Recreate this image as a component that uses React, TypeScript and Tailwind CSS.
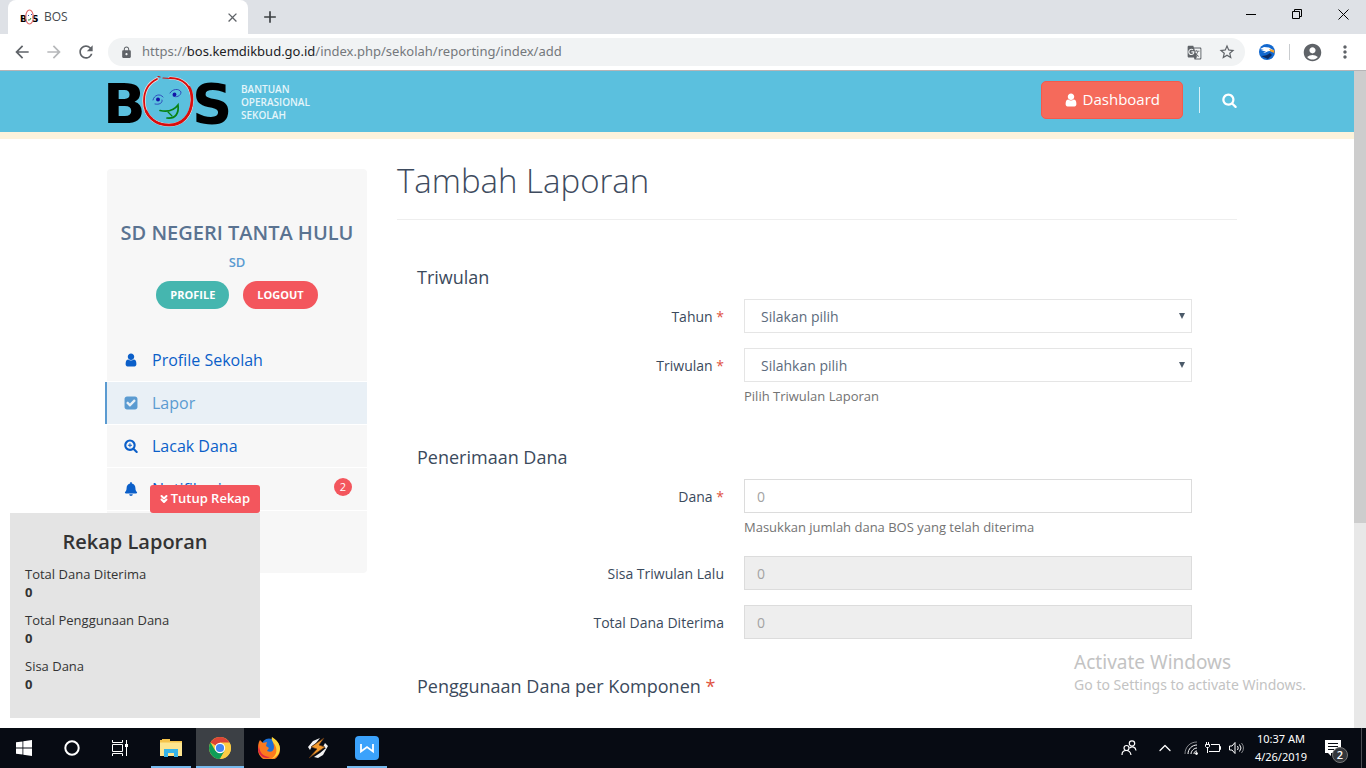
import type { ReactNode } from "react";
import { FaBell } from "react-icons/fa";
import { MdArrowBack, MdArrowForward, MdRefresh, MdLock, MdStarBorder, MdAccountCircle, MdMoreVert, MdAdd, MdClose, MdGTranslate } from "react-icons/md";
import { ChevronsDown, ChevronUp } from "lucide-react";

const OPEN = "font-['Open_Sans','Noto_Sans',sans-serif]";

function UserIcon({ className }: { className: string }) {
  return (
    <svg viewBox="-192 64 1664 1664" fill="currentColor" className={className} aria-hidden="true">
      <path d="M1280 1399q0 109-62.5 187t-150.5 78h-854q-88 0-150.5-78t-62.5-187q0-85 8.5-160.5t31.5-152 58.5-131 94-89 134.5-34.5q131 128 313 128t313-128q76 0 134.5 34.5t94 89 58.5 131 31.5 152 8.5 160.5zm-256-887q0 159-112.5 271.5t-271.5 112.5-271.5-112.5-112.5-271.5 112.5-271.5 271.5-112.5 271.5 112.5 112.5 271.5z" />
    </svg>
  );
}

function SearchIcon({ className, plus }: { className: string; plus?: boolean }) {
  return (
    <svg viewBox="64 64 1664 1728" fill="currentColor" className={className} aria-hidden="true">
      <path d="M1216 832q0-185-131.5-316.5t-316.5-131.5-316.5 131.5-131.5 316.5 131.5 316.5 316.5 131.5 316.5-131.5 131.5-316.5zm512 832q0 52-38 90t-90 38q-54 0-90-38l-343-342q-179 124-399 124-143 0-273.5-55.5t-225-150-150-225-55.5-273.5 55.5-273.5 150-225 225-150 273.5-55.5 273.5 55.5 225 150 150 225 55.5 273.5q0 220-124 399l343 343q37 37 37 90z" />
      {plus && (
        <path d="M1024 800v64q0 13-9.5 22.5t-22.5 9.500h-160v160q0 13-9.500 22.5t-22.5 9.500h-64q-13 0-22.5-9.500t-9.500-22.5v-160h-160q-13 0-22.5-9.500t-9.500-22.5v-64q0-13 9.500-22.5t22.5-9.500h160v-160q0-13 9.500-22.5t22.5-9.500h64q13 0 22.5 9.500t9.500 22.5v160h160q13 0 22.5 9.500t9.500 22.5z" />
      )}
    </svg>
  );
}

function CheckIcon({ className }: { className: string }) {
  return (
    <svg viewBox="64 64 1664 1664" fill="currentColor" className={className} aria-hidden="true">
      <path d="M813 1299l614-614q19-19 19-45t-19-45l-102-102q-19-19-45-19t-45 19l-467 467-211-211q-19-19-45-19t-45 19l-102 102q-19 19-19 45t19 45l358 358q19 19 45 19t45-19zm851-883v960q0 119-84.5 203.5t-203.5 84.5h-960q-119 0-203.5-84.5t-84.5-203.5v-960q0-119 84.5-203.5t203.5-84.5h960q119 0 203.5 84.5t84.5 203.5z" />
    </svg>
  );
}

function Favicon() {
  return (
    <svg viewBox="0 0 19 16" className="h-4 w-[19px]" role="img" aria-label="BOS">
      <g className="font-['DejaVu_Sans',sans-serif] font-bold" fontSize="9" fill="#000">
        <text x="0" y="13">B</text>
        <text x="12" y="13">S</text>
      </g>
      <ellipse cx="9.500" cy="8" rx="3.800" ry="7" fill="none" stroke="#e06a6a" strokeWidth="1.100" />
      <path d="M8 6.500h1m2-1h1" stroke="#3a46b0" />
      <path d="M8 11q2 1 3-2" fill="none" stroke="#2f8f3a" />
    </svg>
  );
}

function Logo({ className }: { className: string }) {
  return (
    <svg viewBox="-6 -4 136 70" className={className} role="img" aria-label="BOS">
      <g className="font-['DejaVu_Sans',sans-serif] font-bold" fontSize="56" fill="#000">
        <text x="-5" y="51">B</text>
        <text x="84" y="51">S</text>
      </g>
      <g fill="none" strokeLinecap="round">
        <path d="M49 7C41 11 36 19 36 29c0 16 12 24 25 24 14 0 23-10 23-25C84 14 75 6 62 6" stroke="#f6dede" strokeWidth="3.200" />
        <path d="M49 7C41 11 36 19 36 29c0 16 12 24 25 24 14 0 23-10 23-25C84 14 75 6 62 6" stroke="#d90d0d" strokeWidth="1.800" />
        <path d="M38 39c5 10 13 14 23 14 13 0 22-9 23-25 0-6-1-10-3-13" stroke="#d90d0d" strokeWidth="2.600" />
        <path d="M50 4.500l2 .5m3 1l7 .5" stroke="#d90d0d" strokeWidth="1.200" />
        <path d="M45 28c1-5 7-7 10-3m-8 7c4 1 8-1 7-4M62 21c2-4 9-5 11-1 0 4-5 6-8 4" stroke="#2a40b8" strokeWidth=".9" />
        <circle cx="50" cy="27.500" r="2" fill="#1414a8" />
        <circle cx="66.500" cy="22.500" r="1.900" fill="#1414a8" />
        <path d="M52 38.500c7 1.500 14 0 18-5.500 1 8-2 14-11 13" stroke="#078210" strokeWidth="1.700" />
        <path d="M60 40l4 4" stroke="#078210" strokeWidth="1.200" />
      </g>
    </svg>
  );
}

function TabStrip() {
  return (
    <div className="flex h-[34px] bg-[#dee1e6] pl-2">
      <div className="flex w-60 items-center rounded-t-lg bg-white pr-2 pl-3">
        <Favicon />
        <span className="ml-[5px] flex-1 text-xs text-[#45494d]">BOS</span>
        <button aria-label="Close tab" className="text-[#5f6368]"><MdClose size={15} /></button>
      </div>
      <button aria-label="New tab" className="ml-3 text-[#3c4043]"><MdAdd size={20} /></button>
      <div className="ml-auto flex items-center gap-9 pr-[17px] pb-[6px] text-black">
        <button aria-label="Minimize"><svg width="10" height="10" stroke="currentColor"><path d="M0 5.500h10" /></svg></button>
        <button aria-label="Restore"><svg width="10" height="10" fill="none" stroke="currentColor"><path d="M.5 2.500h7v7h-7zM2.500 2.500v-2h7v7h-2" /></svg></button>
        <button aria-label="Close"><svg width="11" height="11" stroke="currentColor"><path d="M.5.5l10 10M10.500.5l-10 10" /></svg></button>
      </div>
    </div>
  );
}

function AddressBar() {
  return (
    <div className="flex h-[37px] items-center border-b border-[#b6b4b6] bg-white pr-[11px] pl-3 text-[#5f6368]">
      <button aria-label="Back"><MdArrowBack size={20} /></button>
      <button aria-label="Forward" className="ml-3 text-[#b6b8ba]"><MdArrowForward size={20} /></button>
      <button aria-label="Reload" className="ml-3"><MdRefresh size={20} /></button>
      <div className="ml-3 flex h-7 flex-1 items-center rounded-full bg-[#f1f3f4] pr-[9px] pl-3">
        <MdLock size={13} />
        <p className="ml-[9px] flex-1 font-['Noto_Sans',sans-serif] text-[13px] text-[#74787c]">
          https://<span className="text-[#202124]">bos.kemdikbud.go.id</span>/index.php/sekolah/reporting/index/add
        </p>
        <MdGTranslate size={15} />
        <MdStarBorder size={18} className="ml-4" />
      </div>
      <svg viewBox="0 0 16 16" className="ml-[14px] size-4">
        <circle cx="8" cy="8" r="8" fill="#1268cf" />
        <path d="M1 5l4-2 5 .5 4 2.500-3 1c-3 0-4 2-7 2l3-1.500-5-1 3-.5z" fill="#fff" />
        <path d="M10 5l5 1 .5 3-4-1.500z" fill="#f5a32b" />
        <path d="M2 12c4 0 7-1 9-3l2 2-4 4z" fill="#0c2b63" />
      </svg>
      <span className="mr-3 ml-[14px] h-4 w-px bg-[#c9cccf]" />
      <button aria-label="Account"><MdAccountCircle size={21} /></button>
      <button aria-label="Menu" className="ml-3"><MdMoreVert size={20} /></button>
    </div>
  );
}

function SiteHeader() {
  return (
    <header className="border-b-[7px] border-[#fcf3dc] bg-[#5bc0de] pr-[10px]">
      <div className="mx-auto flex h-[61px] max-w-[1130px]">
        <Logo className="-mt-[3px] -ml-[5px] h-[70px] w-[136px] shrink-0" />
        <p className="mt-3 ml-[3px] text-[10px] leading-[13px] font-semibold text-[#e4f5fa]">
          BANTUAN<br />OPERASIONAL<br />SEKOLAH
        </p>
        <div className="ml-auto flex h-[58px] items-center text-white">
          <a href="#dashboard" className="flex h-[38px] items-center gap-[5px] rounded-[5px] border border-[#f55b4b] bg-[#f56a5b] px-[22px] pb-px text-[15px]">
            <UserIcon className="size-[14px]" />
            Dashboard
          </a>
          <span className="mr-[22px] ml-4 h-[26px] w-px bg-[#d5f0f8]" />
          <button aria-label="Search"><SearchIcon className="size-[15px]" /></button>
        </div>
      </div>
    </header>
  );
}

function MenuItem({ icon, label, active, badge }: { icon: ReactNode; label: string; active?: boolean; badge?: number }) {
  return (
    <li className="border-b border-white">
      <a
        href="#menu"
        className={
          active
            ? "-ml-[2px] flex h-[42px] items-center border-l-2 border-[#5b9bd1] bg-[#e9f0f6] pr-[15px] pl-[17px] text-[#5b9bd1]"
            : "flex h-[42px] items-center pr-[15px] pl-[17px] text-[#0b5fc9]"
        }
      >
        {icon}
        <span className="ml-[14px] flex-1 text-[16px]">{label}</span>
        {badge && <span className="mb-1 flex size-[18px] items-center justify-center rounded-full bg-[#f3565d] text-[11px] text-white">{badge}</span>}
      </a>
    </li>
  );
}

function Sidebar() {
  return (
    <aside className="mt-[30px] w-[260px] shrink-0 self-start rounded bg-[#f7f7f7] pt-[52px] pb-[62px]">
      <h2 className="text-center text-[20px] leading-6 font-semibold whitespace-nowrap text-[#5a7391]">SD NEGERI TANTA HULU</h2>
      <p className="mt-[9px] text-center text-[13px] leading-4 font-semibold text-[#5b9bd1]">SD</p>
      <div className="mt-[11px] flex justify-center gap-[14px] text-[11px] font-bold text-white">
        <button className="h-7 rounded-full bg-[#45b6af] px-[14px]">PROFILE</button>
        <button className="h-7 rounded-full bg-[#f3565d] px-[14px]">LOGOUT</button>
      </div>
      <ul className="mt-[30px]">
        <MenuItem icon={<UserIcon className="size-[14px]" />} label="Profile Sekolah" />
        <MenuItem icon={<CheckIcon className="size-[14px]" />} label="Lapor" active />
        <MenuItem icon={<SearchIcon plus className="size-[14px]" />} label="Lacak Dana" />
        <MenuItem icon={<FaBell className="size-[14px]" />} label="Notifikasi" badge={2} />
      </ul>
    </aside>
  );
}

function Field({ id, label, required, help, children }: { id: string; label: string; required?: boolean; help?: string; children: ReactNode }) {
  return (
    <div className="mb-[15px] grid grid-cols-[minmax(0,307fr)_minmax(0,448fr)] gap-x-5 pr-[45px]">
      <label htmlFor={id} className="pt-2 text-right text-[14px] leading-5 text-[#3b4a5c]">
        {label}
        {required && <span className="text-[#e0533f]"> *</span>}
      </label>
      <div>
        {children}
        {help && <p className="mt-[5px] text-[13px] leading-[18px] text-[#737373]">{help}</p>}
      </div>
    </div>
  );
}

function SelectBox({ id, text }: { id: string; text: string }) {
  return (
    <div className="relative">
      <select id={id} className="block h-[34px] w-full appearance-none border border-[#e5e5e5] bg-white px-4 text-[14px] text-[#5d6b7c]">
        <option>{text}</option>
      </select>
      <svg viewBox="0 0 6 6" className="pointer-events-none absolute top-[14px] right-[7px] size-[6px]" fill="#4b5a69"><path d="M0 0h6L3 6z" /></svg>
    </div>
  );
}

const INPUT = "block h-[34px] w-full border border-[#dcdcdc] bg-white px-3 text-[14px] placeholder:text-[#a3a3a3] disabled:bg-[#eeeeee]";

function ReportForm() {
  return (
    <main className="min-w-0 flex-1 pt-[17px]">
      <h1 className="border-b border-[#eeeeee] pb-[13px] text-[33px] leading-[50px] font-light text-[#3e4b5e]">Tambah Laporan</h1>
      <form className="pl-5">
        <h2 className="mt-[45px] mb-[10px] text-[18px] leading-6 text-[#3b4a5c]">Triwulan</h2>
        <Field id="tahun" label="Tahun" required><SelectBox id="tahun" text="Silakan pilih" /></Field>
        <Field id="triwulan" label="Triwulan" required help="Pilih Triwulan Laporan"><SelectBox id="triwulan" text="Silahkan pilih" /></Field>
        <h2 className="mt-10 mb-[10px] text-[18px] leading-6 text-[#3b4a5c]">Penerimaan Dana</h2>
        <Field id="dana" label="Dana" required help="Masukkan jumlah dana BOS yang telah diterima"><input id="dana" placeholder="0" className={INPUT} /></Field>
        <div className="pt-[5px]">
          <Field id="sisa" label="Sisa Triwulan Lalu"><input id="sisa" placeholder="0" disabled className={INPUT} /></Field>
        </div>
        <Field id="total" label="Total Dana Diterima"><input id="total" placeholder="0" disabled className={INPUT} /></Field>
        <h2 className="mt-[35px] text-[18px] leading-6 text-[#3b4a5c]">Penggunaan Dana per Komponen <span className="text-[#e0533f]">*</span></h2>
      </form>
    </main>
  );
}

function RecapPanel() {
  const rows = ["Total Dana Diterima", "Total Penggunaan Dana", "Sisa Dana"];
  return (
    <section className="absolute bottom-[10px] left-[10px] w-[250px] text-[#333333]">
      <button className="ml-auto flex h-7 items-center gap-px rounded-[3px] bg-[#f3565d] pr-[10px] pl-2 text-[13px] font-semibold text-white">
        <ChevronsDown size={12} strokeWidth={4} />
        Tutup Rekap
      </button>
      <div className="bg-[#e4e4e4] px-[15px] pt-[15px] pb-[15px] text-[13px] leading-[18px]">
        <h3 className="mb-[9px] text-center text-[20px] leading-7 font-semibold">Rekap Laporan</h3>
        <dl>
          {rows.map((r) => (
            <div key={r} className="mb-[10px]">
              <dt>{r}</dt>
              <dd className="font-bold">0</dd>
            </div>
          ))}
        </dl>
      </div>
    </section>
  );
}

function TaskButton({ label, tone, children }: { label: string; tone: "plain" | "open" | "active"; children: ReactNode }) {
  const look = {
    plain: "flex w-12 items-center justify-center",
    open: "flex w-12 items-center justify-center bg-[linear-gradient(#76b9ed,#76b9ed)] bg-[length:40px_2px] bg-bottom bg-no-repeat",
    active: "flex w-12 items-center justify-center border-b-2 border-[#76b9ed] bg-[#3c4045] pt-[2px]",
  }[tone];
  return <button aria-label={label} className={look}>{children}</button>;
}

function Taskbar() {
  return (
    <footer className="flex h-10 shrink-0 bg-[#070b13] text-white">
      <TaskButton label="Start" tone="plain">
        <svg viewBox="0 0 16 16" className="size-4" fill="#fff"><path d="M0 2.300l6.500-.9v6.200H0zM7.300 1.300L16 0v7.600H7.300zM0 8.400h6.500v6.200L0 13.700zM7.300 8.400H16V16l-8.700-1.300z" /></svg>
      </TaskButton>
      <TaskButton label="Search" tone="plain">
        <svg viewBox="0 0 16 16" className="size-4" fill="none" stroke="#fff" strokeWidth="2"><circle cx="8" cy="8" r="6.700" /></svg>
      </TaskButton>
      <TaskButton label="Task view" tone="plain">
        <svg viewBox="0 0 16 16" className="size-4" fill="none" stroke="#fff"><path d="M.5 0v2.500h10V0M.5 4.500h10v7H.5zM.5 16v-2.500h10V16M14.500 0v16" /><path d="M13 4h3v3h-3z" fill="#fff" stroke="none" /></svg>
      </TaskButton>
      <div className="ml-[3px] flex gap-px">
        <TaskButton label="File Explorer" tone="open">
          <svg viewBox="0 0 22 20" className="h-5 w-[22px]"><path d="M0 2h2V1h8v2h12v15H0z" fill="#f5c34b" /><path d="M0 4.500h22V18H0z" fill="#fde58f" /><path d="M4 19v-8h14v8h-4v-4H8v4z" fill="#36b4e8" /></svg>
        </TaskButton>
        <TaskButton label="Chrome" tone="active">
          <svg viewBox="0 0 22 22" className="size-[22px]">
            <circle cx="11" cy="11" r="11" fill="#fccc44" />
            <path d="M11 11L1.500 5.500A11 11 0 0 1 20.500 5.500H11z" fill="#db4437" />
            <path d="M1.500 5.500L6.300 13.800 11 16l-.3 6A11 11 0 0 1 1.500 5.500z" fill="#0f9d58" />
            <path d="M11 22l4.700-8.200L11 12l-4.700 2z" fill="#0f9d58" />
            <path d="M11 22l4.700-8.200L20.500 5.500A11 11 0 0 1 11 22z" fill="#fccc44" />
            <circle cx="11" cy="11" r="5.200" fill="#fff" /><circle cx="11" cy="11" r="4.100" fill="#4285f4" />
          </svg>
        </TaskButton>
        <TaskButton label="Firefox" tone="plain">
          <svg viewBox="0 0 22 22" className="size-[22px]">
            <circle cx="11" cy="9" r="7.500" fill="#1c6fd4" />
            <path d="M2 3l3 3 4-1-1 4 3 2-2 3c4 2 7 0 7-4 0-3-2-5 0-8 4 3 6 6 6 10a11 11 0 0 1-22 1C0 9 0 6 2 3z" fill="#fb7a1e" />
            <path d="M14 0c5 3 8 7 8 12a11 11 0 0 1-9 10c5-3 7-8 4-14-2-3-4-5-3-8z" fill="#ffd53a" />
            <path d="M1 8c0 7 4 12 11 12-4 3-11-1-12-7z" fill="#e0283f" />
          </svg>
        </TaskButton>
        <TaskButton label="Winamp" tone="plain">
          <svg viewBox="0 0 22 22" className="size-[22px]">
            <path d="M6 4l7-3-4 5-4 3-2 4-2-3zM18 6l3 3-5 9-5 3-4-1 6-4 6-5-3-1z" fill="#f2f2f2" />
            <path d="M17 1L4 10l6 2-8 9 16-11-6-2z" fill="#f39a2d" stroke="#5b3213" strokeWidth=".7" />
          </svg>
        </TaskButton>
        <TaskButton label="WPS Office" tone="open">
          <svg viewBox="0 0 24 24" className="size-6"><rect width="24" height="24" rx="4" fill="#3ba2fb" /><path d="M6 8v7.500l6-4.500 6 4.500V8" fill="none" stroke="#fff" strokeWidth="1.800" /></svg>
        </TaskButton>
      </div>
      <div className="ml-auto flex items-center">
        <svg viewBox="0 0 16 16" className="size-4" fill="none" stroke="#fff" strokeWidth="1.200"><circle cx="11" cy="3.500" r="2.700" /><circle cx="5.500" cy="8" r="2.500" /><path d="M1 15c0-6 8-6 9 0M8.500 8c3-2 6-1 6.500 2.500" /></svg>
        <ChevronUp size={20} strokeWidth={1.5} className="ml-[18px]" />
        <svg viewBox="0 0 14 14" className="ml-[9px] size-[14px]" fill="none" stroke="#fff"><path d="M1 13C1 6 6 1 13 1" opacity=".5" /><path d="M4 13c0-5 4-9 9-9M7 13c0-3 3-6 6-6M10 13c0-2 1-3 3-3" /><circle cx="12.500" cy="12.500" r="1" fill="#fff" /></svg>
        <svg viewBox="0 0 16 14" className="ml-[7px] h-[14px] w-4" fill="none" stroke="#fff"><path d="M6 3.500h8.500v7H4M14.500 5.500h1v3h-1M.5 3.500h4v2l-1 1h-2l-1-1zM1.500 1v2M3.500 1v2M2.500 7v5" /></svg>
        <svg viewBox="0 0 16 14" className="ml-2 h-[14px] w-4" fill="none" stroke="#fff"><path d="M.5 5h2.500l3-3.500v11L3 9H.5zM8.500 5q1.500 2 0 4M10.500 3.500q3 3.500 0 7" /><path d="M12.500 2q4 5 0 10" opacity=".5" /></svg>
        <div className="ml-[9px] flex w-[54px] flex-col items-center font-['Noto_Sans',sans-serif] text-[11px] leading-[18px] whitespace-nowrap">
          <span>10:37 AM</span>
          <span>4/26/2019</span>
        </div>
        <div className="relative mr-3 ml-[17px] pr-2">
          <svg viewBox="0 0 16 16" className="size-4"><path d="M0 0h16v13H6v3l-3-3H0z" fill="#fff" /><path d="M3 3.500h10M3 6.500h10M3 9.500h6" stroke="#070b13" /></svg>
          <span className="absolute top-[7px] left-[7px] flex size-4 items-center justify-center rounded-full border border-[#777] bg-[#33363b] text-[11px] font-semibold">2</span>
        </div>
        <span className="mr-1 h-10 w-px bg-[#4a4d53]" />
      </div>
    </footer>
  );
}

export default function App() {
  return (
    <div className={`flex h-screen flex-col overflow-hidden bg-white ${OPEN}`}>
      <TabStrip />
      <AddressBar />
      <div className="relative flex min-h-0 flex-1">
        <div className="min-w-0 flex-1 overflow-hidden">
          <SiteHeader />
          <div className="pr-[10px]">
            <div className="mx-auto flex max-w-[1130px] gap-[30px]">
              <Sidebar />
              <ReportForm />
            </div>
          </div>
        </div>
        <div className="w-3 bg-[#e8e8e8]"><div className="h-[452px] bg-[#cdcdcd]" /></div>
        <RecapPanel />
        <div className="pointer-events-none absolute right-[60px] bottom-[34px] font-['Noto_Sans',sans-serif] text-[#c3c3c3]">
          <p className="text-[19px] leading-7">Activate Windows</p>
          <p className="text-[14px] leading-[18px]">Go to Settings to activate Windows.</p>
        </div>
      </div>
      <Taskbar />
    </div>
  );
}
